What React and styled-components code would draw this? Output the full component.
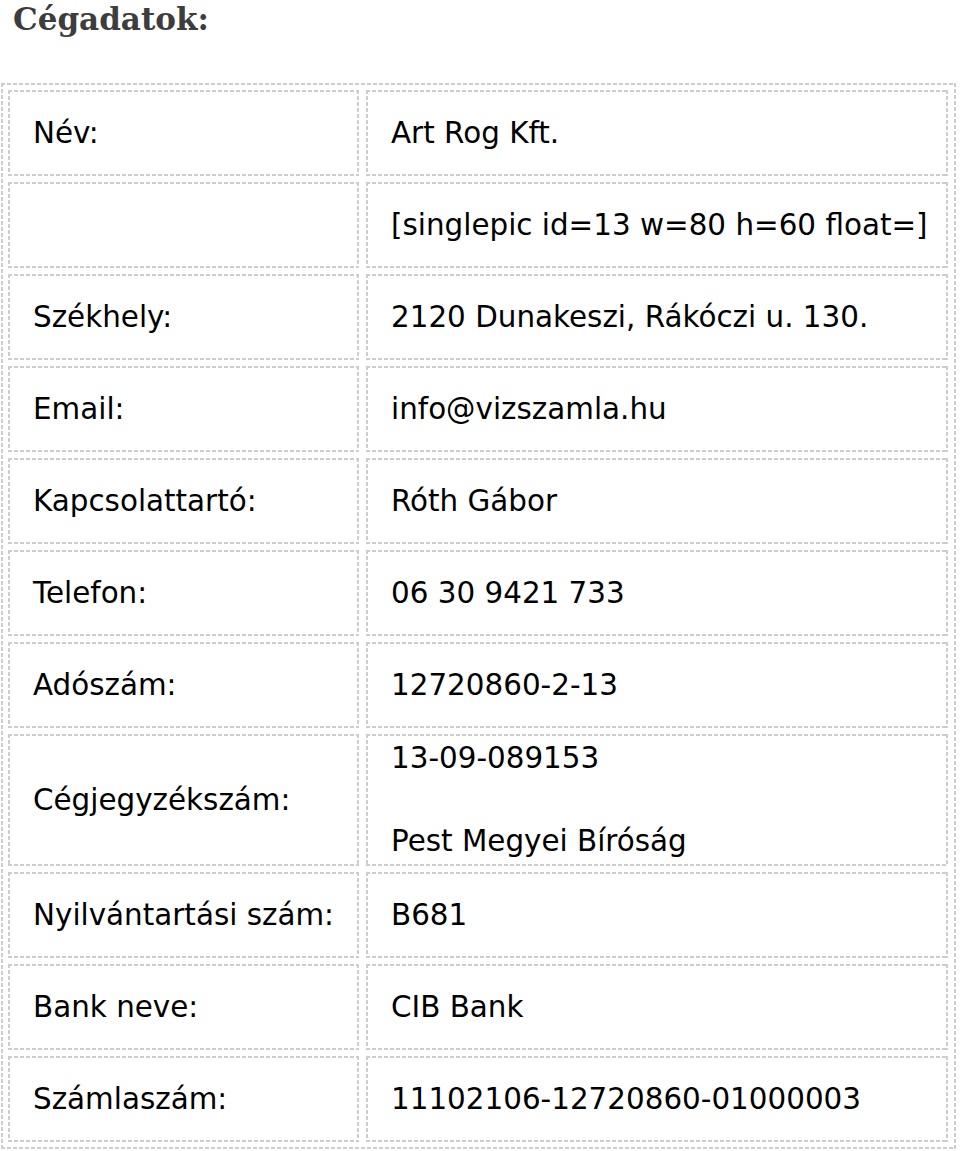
import React from 'react';
import styled, { createGlobalStyle, css } from 'styled-components';

const Global = createGlobalStyle`
  body {
    margin: 0;
    background: #fff;
  }
`;

const rows = [
  { label: 'Név:', value: ['Art Rog Kft.'] },
  { label: '', value: ['[singlepic id=13 w=80 h=60 float=]'] },
  { label: 'Székhely:', value: ['2120 Dunakeszi, Rákóczi u. 130.'] },
  { label: 'Email:', value: ['info@vizszamla.hu'] },
  { label: 'Kapcsolattartó:', value: ['Róth Gábor'] },
  { label: 'Telefon:', value: ['06 30 9421 733'] },
  { label: 'Adószám:', value: ['12720860-2-13'] },
  { label: 'Cégjegyzékszám:', value: ['13-09-089153', 'Pest Megyei Bíróság'] },
  { label: 'Nyilvántartási szám:', value: ['B681'] },
  { label: 'Bank neve:', value: ['CIB Bank'] },
  { label: 'Számlaszám:', value: ['11102106-12720860-01000003'] },
];

function App() {
  return (
    <Page>
      <Global />
      <Title>Cégadatok:</Title>
      <Table>
        {rows.map((r, i) => (
          <React.Fragment key={i}>
            <Cell $tall={r.value.length > 1}>{r.label}</Cell>
            <Cell $tall={r.value.length > 1} $stack={r.value.length > 1}>
              {r.value.map((v, j) => (
                <span key={j}>{v}</span>
              ))}
            </Cell>
          </React.Fragment>
        ))}
      </Table>
    </Page>
  );
}

// dashed frame drawn with gradients, so the dash length matches the picture
const dashed = css`
  background:
    repeating-linear-gradient(90deg, #cdcdcd 0 4px, transparent 4px 6px) top left / 100% 2px no-repeat,
    repeating-linear-gradient(90deg, #cdcdcd 0 4px, transparent 4px 6px) bottom left / 100% 2px no-repeat,
    repeating-linear-gradient(180deg, #cdcdcd 0 4px, transparent 4px 6px) top left / 2px 100% no-repeat,
    repeating-linear-gradient(180deg, #cdcdcd 0 4px, transparent 4px 6px) top right / 2px 100% no-repeat,
    #fff;
`;

const Page = styled.div`
  padding: 0 4px 0 1px;
`;

const Title = styled.h2`
  margin: 0;
  padding: 2px 0 0 12px;
  height: 81px;
  font-family: "DejaVu Serif", Georgia, serif;
  font-weight: bold;
  font-size: 31px;
  line-height: 34px;
  color: #3d3d3d;
`;

const Table = styled.div`
  ${dashed};
  display: grid;
  grid-template-columns: 351px 582px;
  column-gap: 7px;
  row-gap: 6px;
  padding: 7px 8px 7px 7px;
  width: fit-content;
`;

const Cell = styled.div`
  ${dashed};
  box-sizing: border-box;
  height: ${p => (p.$tall ? '132px' : '86px')};
  padding: ${p => (p.$stack ? '6px 25px 7px' : '0 25px')};
  display: flex;
  flex-direction: ${p => (p.$stack ? 'column' : 'row')};
  justify-content: ${p => (p.$stack ? 'space-between' : 'flex-start')};
  align-items: ${p => (p.$stack ? 'flex-start' : 'center')};
  font-family: "DejaVu Sans", Verdana, sans-serif;
  font-size: 29.4px;
  line-height: 36px;
  color: #000;
  white-space: nowrap;
`;

export default App;
